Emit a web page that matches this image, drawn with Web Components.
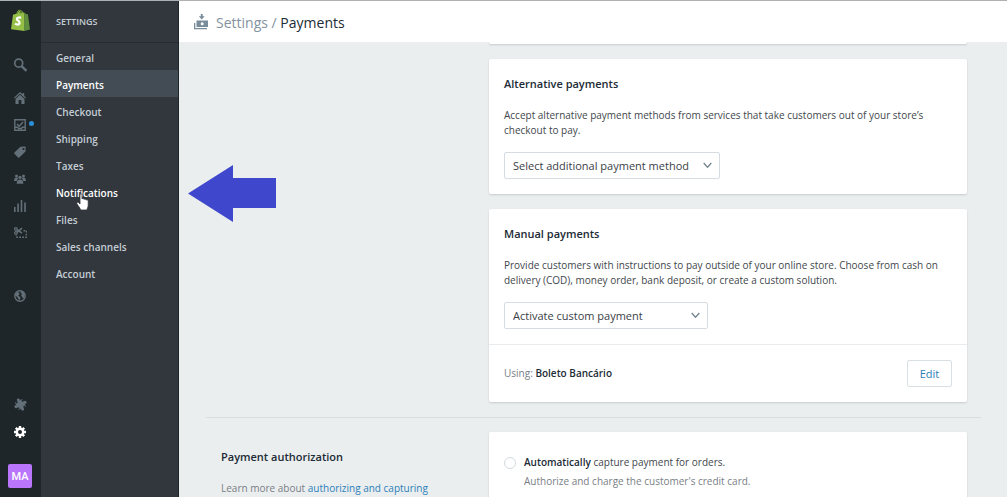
<!DOCTYPE html>
<html lang="en">
<head>
<meta charset="utf-8">
<meta name="viewport" content="width=device-width, initial-scale=1">
<title>Settings / Payments</title>
<style>
html, body { margin: 0; height: 100%; }
body { font: 10px/15px "Open Sans", "Noto Sans", sans-serif; color: #42474c; overflow: hidden; }
</style>
</head>
<body>
<settings-app></settings-app>
<script>
const define = (name, html, setup) => customElements.define(name, class extends HTMLElement {
  connectedCallback() {
    if (this.shadowRoot) return;
    const root = this.attachShadow({ mode: "open" });
    root.innerHTML = html;
    if (setup) setup(this, root);
  }
});

/* Far-left icon rail */
define("icon-rail", `
<style>
:host { display: flex; flex-direction: column; align-items: center; box-sizing: border-box; width: 41px; padding: 7px 1px 9px 0; background: #1f2629; }
nav { display: flex; flex-direction: column; align-items: center; }
a { display: grid; place-items: center; width: 40px; height: 27px; color: #637079; position: relative; }
.logo { height: 24px; margin-bottom: 19px; }
.group { margin-top: 6px; }
.world { margin-top: 36px; }
.bottom { margin-top: auto; margin-bottom: 19px; }
.on { color: #fff; }
.dot { position: absolute; left: 29px; top: 10px; width: 5px; height: 5px; border-radius: 50%; background: #2a8fd8; }
button { box-sizing: border-box; width: 24px; height: 24px; padding: 0; border: 0; border-radius: 2px; background: #b975fb; color: #fff; font: 500 11px/26px Roboto, sans-serif; }
svg { display: block; fill: currentColor; }
</style>
<a class="logo" href="#" aria-label="Shopify"><svg width="20" height="22" viewBox="0 0 20 22">
  <path fill="#95bf47" d="M1 20.200 3 5.800 6.200 4.800C6.800 2.300 8.300.6 10 .7c.7 0 1.200.4 1.500 1 1 .2 1.700.9 2.100 1.900l1 .3V22z"/>
  <path fill="#5e8e3e" d="m14.400 3.600 1.700 1.500 1.800.2L20 20.500 14.400 22z"/>
  <path fill="none" stroke="#3c5b2b" stroke-width=".9" d="M6.900 4.800C7.400 3 8.600 1.600 9.900 1.600c1.400 0 1.500 1.400 1.500 2.700M10 4.500c.1-1.400.7-2.300 1.600-2.400 1 0 1.500 1 1.700 2"/>
  <path fill="none" stroke="#fff" stroke-width="2.200" d="M11 9c-1.400-.8-4-.8-4.100.9C6.900 11.700 9.900 11.900 9.600 14c-.3 2-2.800 1.900-4.600.7"/>
</svg></a>
<a href="#" aria-label="Search"><svg width="14" height="14" viewBox="0 0 13 13"><circle cx="5.300" cy="4.800" r="3.700" fill="none" stroke="currentColor" stroke-width="1.600"/><path d="m8 7.500 4.500 4.500" stroke="currentColor" stroke-width="2.200"/></svg></a>
<nav class="group" aria-label="Store">
<a href="#" aria-label="Home"><svg width="12" height="12" viewBox="0 0 12 12"><path d="M6 0 8.500 2.300V1h1.700v3L12 5.700l-.8.9L6 1.700.8 6.600 0 5.700z"/><path d="m6 2.700 4.500 4.200V12H7.400V8H4.600v4H1.500V6.900z"/></svg></a>
<a href="#" aria-label="Orders"><svg width="12" height="12" viewBox="0 0 12 12"><path fill="none" stroke="currentColor" stroke-width="1.400" d="M.8.8h10.400v10.400H.8zM3 5l2.200 2.300L9 3M1 8.200h2.600l1 1.300h2.800l1-1.300H11"/></svg><span class="dot"></span></a>
<a href="#" aria-label="Products"><svg width="12" height="12" viewBox="0 0 12 12"><path fill-rule="evenodd" d="M6.500.8 11 .5q.6 0 .7.700L11.500 5.500 5.300 11.500q-.6.500-1.200 0L.4 7.800q-.5-.6 0-1.200zM9.500 1.900a1.100 1.100 0 1 0 0 2.200 1.100 1.100 0 0 0 0-2.200"/></svg></a>
<a href="#" aria-label="Customers"><svg width="12" height="10" viewBox="0 0 12 10"><circle cx="6" cy="3.300" r="1.600"/><circle cx="2.500" cy="1.900" r="1.500"/><circle cx="9.500" cy="1.900" r="1.500"/><path d="M2.700 9.700c0-3 1.200-4.300 3.300-4.300s3.300 1.300 3.300 4.300zM0 7c.1-2.200.8-3.400 2.500-3.400.8 0 1.300.3 1.600.8L2.700 7zM12 7c-.1-2.200-.8-3.400-2.500-3.400-.8 0-1.300.3-1.600.8L9.300 7z"/></svg></a>
<a href="#" aria-label="Reports"><svg width="12" height="12" viewBox="0 0 12 12"><path d="M0 7h1.600v5H0zM3.300 3.500h1.600V12H3.300zM6.700 0h1.600v12H6.700zM10.200 2.500h1.600V12h-1.600z"/></svg></a>
<a href="#" aria-label="Discounts"><svg width="13" height="11" viewBox="0 0 13 11"><g fill="none" stroke="currentColor" stroke-width="1.200"><circle cx="1.900" cy="1.900" r="1.300"/><circle cx="1.900" cy="6" r="1.300"/><path d="M3 2.700 8 6.200M3 5.300 8 1.200" stroke-width="1.600"/><path stroke-dasharray="1.800 1.200" d="M9.500 3.700h3v6.500H2.200V8.500" stroke-width="1.500"/></g></svg></a>
</nav>
<a class="world" href="#" aria-label="Online store"><svg width="12" height="12" viewBox="0 0 12 12"><circle cx="6" cy="6" r="5.200" fill="none" stroke="currentColor" stroke-width="1.400"/><path d="m1.300 3.800 2.200-1.800 1.800.8.200 1.400-1.300 1.200 1.400 1.400.9.900-.3 1.300-1 1.500-.8-1.800L3 6.800 1 5.600zM6.900 1l2.500.8L10.800 5l-.5 2.500-1.200 1.200-.8-1.800L7 5.800 7.900 4.200 6.700 2.800z"/></svg></a>
<nav class="bottom" aria-label="Manage">
<a href="#" aria-label="Apps"><svg width="13" height="13" viewBox="0 0 13 13"><g transform="rotate(-25 6.500 6.500)"><path d="M2.300 2.300h8.400v8.400H2.300z"/><circle cx="6.500" cy="1.500" r="1.500"/><circle cx="11.500" cy="6.500" r="1.500"/><circle cx="6.500" cy="11.500" r="1.500"/><circle cx="1.500" cy="6.500" r="1.500"/><g fill="#1f2629"><circle cx="3.900" cy="3" r="1"/><circle cx="10" cy="3.900" r="1"/><circle cx="9.100" cy="10" r="1"/><circle cx="3" cy="9.100" r="1"/></g></g></svg></a>
<a class="on" href="#" aria-label="Settings"><svg width="12" height="12" viewBox="0 0 12 12"><g stroke="currentColor" stroke-width="2.400"><path d="M6 0v3M6 9v3M0 6h3M9 6h3M1.800 1.800l2 2M8.200 8.200l2 2M10.200 1.800l-2 2M3.800 8.200l-2 2"/></g><circle cx="6" cy="6" r="3.200" fill="none" stroke="currentColor" stroke-width="2.400"/></svg></a>
</nav>
<button type="button" aria-label="Account menu">MA</button>
`);

/* Settings section menu */
define("settings-menu", `
<style>
:host { display: block; box-sizing: border-box; width: 138px; background: #31373d; border-right: 1px solid #1f2629; color: #c4cdd5; font-weight: 600; }
h2 { margin: 0; padding: 0 15px; height: 41px; line-height: 42px; font-size: 9px; font-weight: 600; border-bottom: 1px solid #262c31; }
ul { list-style: none; margin: 0; padding: 0; }
a { display: block; padding: 3px 15px 0; line-height: 24px; color: inherit; text-decoration: none; }
a.on { background: #434c54; color: #fff; }
a.hover { color: #fff; }
</style>
<h2>SETTINGS</h2>
<nav aria-label="Settings"><ul>
<li><a href="#">General</a></li><li><a class="on" href="#" aria-current="page">Payments</a></li><li><a href="#">Checkout</a></li><li><a href="#">Shipping</a></li><li><a href="#">Taxes</a></li><li><a class="hover" href="#">Notifications</a></li><li><a href="#">Files</a></li><li><a href="#">Sales channels</a></li><li><a href="#">Account</a></li>
</ul></nav>
`);

define("page-header", `
<style>
:host { display: flex; align-items: center; gap: 8px; height: 41px; padding: 0 15px; background: #fff; font-size: 14px; line-height: 20px; color: #212b35; flex: none; }
svg { display: block; fill: #798c9c; }
h1 { margin: 0; font: inherit; padding-top: 2px; }
a, span { color: #8292a0; text-decoration: none; }
</style>
<svg width="14" height="16" viewBox="0 0 14 16"><path d="M6.800 0h1.900v2.300h2L7.750 5.500 4.800 2.300h2z"/><path fill-rule="evenodd" d="M2.500 6.500H14V13H2.500zM8.200 8.200a1.500 1.500 0 1 0 0 3 1.500 1.500 0 0 0 0-3"/><path d="M0 9h1.300v5H13v1.300H0z"/></svg>
<h1><a href="#">Settings</a> <span>/</span> Payments</h1>
`);

/* White panel; the "footer" slot is drawn below a rule */
define("ui-card", `
<style>
:host { display: block; background: #fff; border-radius: 2px; box-shadow: 0 1px 2px rgba(50, 70, 80, .2); }
.body { padding: 15px; }
h2 { margin: 0 0 14px; font-size: 11px; line-height: 20px; font-weight: 600; color: #212b35; }
.foot { border-top: 1px solid #e8eced; padding: 15px; }
</style>
<div class="body"><h2></h2><slot></slot></div><div class="foot"><slot name="footer"></slot></div>
`, (host, root) => {
  const heading = host.getAttribute("heading");
  if (heading) root.querySelector("h2").textContent = heading; else root.querySelector("h2").remove();
  if (!host.querySelector("[slot=footer]")) root.querySelector(".foot").remove();
});

define("ui-select", `
<style>
:host { display: block; position: relative; width: fit-content; margin-top: 14px; }
select { display: block; box-sizing: border-box; height: 27px; padding: 0 24px 0 8px; appearance: none; border: 1px solid #d6dce2; border-radius: 2px; background: #fff; color: #3a4147; font: 11px/18px "Open Sans", "Noto Sans", sans-serif; }
svg { position: absolute; right: 8px; top: 10px; fill: none; stroke: #74848f; stroke-width: 1.300; pointer-events: none; }
</style>
<select></select><svg width="9" height="7" viewBox="0 0 9 7"><path d="m.7 1 3.800 4.200L8.300 1"/></svg>
`, (host, root) => {
  const select = root.querySelector("select");
  select.add(new Option(host.getAttribute("value")));
  select.setAttribute("aria-label", host.getAttribute("value"));
  select.style.width = host.getAttribute("width") + "px";
});

define("ui-button", `
<style>
:host { display: block; }
button { display: block; box-sizing: border-box; height: 27px; min-width: 45px; padding: 0 11px; border: 1px solid #d9e0e4; border-radius: 2px; background: #fff; color: #2b7fb8; font: 11px/18px "Open Sans", "Noto Sans", sans-serif; }
</style>
<button type="button"><slot></slot></button>
`);

define("radio-option", `
<style>
:host { display: block; }
label { display: grid; grid-template-columns: 12px 1fr; column-gap: 8px; align-items: center; line-height: 19px; padding-top: 6px; }
input { appearance: none; box-sizing: border-box; width: 12px; height: 12px; margin: 0; border: 1px solid #d3dbe0; border-radius: 50%; background: #fff; }
.help { grid-column: 2; color: #798086; }
</style>
<label><input type="radio" name="capture"><span><slot></slot></span><span class="help"><slot name="help"></slot></span></label>
`);

define("payments-page", `
<style>
:host { display: block; flex: 1; min-height: 0; overflow: hidden; background: #ebeeef; padding: 0 26px 0 27px; }
section { display: grid; grid-template-columns: 268px minmax(0, 1fr); padding: 0 14px 15px 15px; }
section + section { border-top: 1px solid #d8dee0; padding-top: 14px; }
.cards { display: grid; gap: 15px; align-content: start; }
.previous { height: 2px; background: #fff; border-radius: 0 0 2px 2px; box-shadow: 0 1px 2px rgba(50, 70, 80, .2); }
p { margin: 0; }
.row { display: flex; align-items: center; justify-content: space-between; }
.row span, .intro p { color: #798086; }
b { font-weight: 600; color: #212b35; }
.intro { padding-top: 15px; }
.intro h2 { margin: 0 0 14px; font-size: 11px; line-height: 20px; font-weight: 600; color: #212b35; }
a { color: #2b7fb8; text-decoration: none; }
</style>
<section><div></div><div class="cards">
  <div class="previous"></div>
  <ui-card heading="Alternative payments">
    <p>Accept alternative payment methods from services that take customers out of your store’s checkout to pay.</p>
    <ui-select value="Select additional payment method" width="216"></ui-select>
  </ui-card>
  <ui-card heading="Manual payments">
    <p>Provide customers with instructions to pay outside of your online store. Choose from cash on delivery (COD), money order, bank deposit, or create a custom solution.</p>
    <ui-select value="Activate custom payment" width="204"></ui-select>
    <div class="row" slot="footer"><p><span>Using:</span> <b>Boleto Bancário</b></p><ui-button>Edit</ui-button></div>
  </ui-card>
</div></section>
<section>
  <div class="intro"><h2>Payment authorization</h2><p>Learn more about <a href="#">authorizing and capturing</a></p></div>
  <div class="cards"><ui-card><radio-option><b>Automatically</b> capture payment for orders.<span slot="help">Authorize and charge the customer's credit card.</span></radio-option></ui-card></div>
</section>
`);

/* Tutorial overlay: pointer hand and arrow marking a menu entry */
define("tutorial-marks", `
<style>
:host { position: absolute; left: 0; top: 0; pointer-events: none; }
svg { position: absolute; }
.arrow { left: 188px; top: 164px; }
.hand { left: 76px; top: 192px; }
</style>
<svg class="arrow" width="88" height="57" viewBox="0 0 88 57"><path fill="#3f48cc" d="M0 28.500 45 0v13h43v30H45v14z"/></svg>
<svg class="hand" width="13" height="18" viewBox="0 0 13 18"><path fill="#fff" stroke="#31373d" stroke-width=".8" d="M4 1.800C4 .3 6 .3 6 1.800V6c.3-.8 1.900-.7 2 .5.400-.8 1.900-.6 2 .6.500-.7 2.200-.4 2.200 1.100v4c0 1.700-.9 2.500-1.200 4.800H4.600C4 14.700 2.200 13 .9 10.800.2 9.400 1.900 8.500 2.900 9.700L4 11z"/></svg>
`);

define("settings-app", `
<style>
:host { display: flex; position: relative; box-sizing: border-box; height: 100vh; border-top: 1px solid #aeb1b3; overflow: hidden; }
icon-rail, settings-menu { flex: none; }
main { flex: 1; min-width: 0; display: flex; flex-direction: column; }
</style>
<icon-rail></icon-rail><settings-menu></settings-menu>
<main><page-header></page-header><payments-page></payments-page></main>
<tutorial-marks></tutorial-marks>
`);
</script>
</body>
</html>
